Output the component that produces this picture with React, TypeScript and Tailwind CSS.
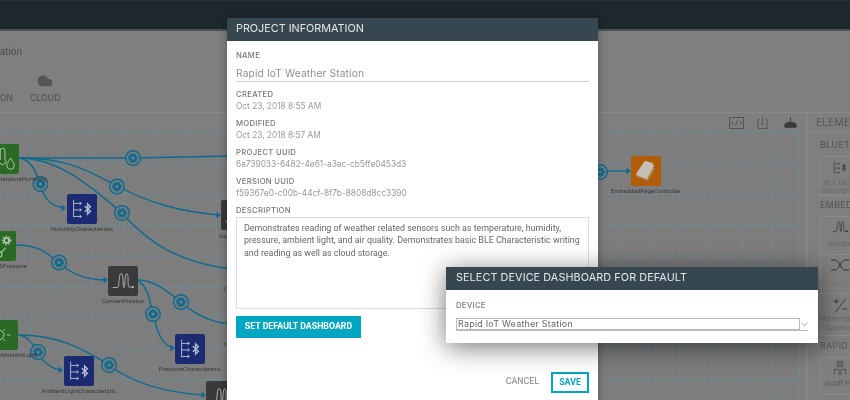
import React from "react";
import { Cloud } from "lucide-react";

const OY = 132;
const wires = [
  "M19 158 C60 158 100 158 133 158 L230 156",
  "M19 158 C70 158 90 172 117 186 C150 203 180 212 220 215",
  "M19 158 C60 158 95 190 122 213 C150 245 180 262 230 269",
  "M19 158 C32 160 36 172 40 184 C44 198 50 207 65 208",
  "M16 245 C40 245 48 254 59 263 C72 274 85 280 107 280",
  "M137 280 C155 280 168 292 181 302 C195 315 210 322 230 324",
  "M137 280 C147 285 150 300 153 314 C157 332 162 346 174 348",
  "M18 335 C28 336 33 344 38 352 C43 362 50 369 62 370",
  "M18 335 C60 335 85 350 109 365 C135 385 170 393 205 395",
  "M600 171 L630 171",
];
const arrows: [number, number][] = [[220, 215], [65, 208], [107, 280], [174, 348], [62, 370], [205, 395], [630, 171]];
const gears: [number, number][] = [[133, 158], [117, 186.5], [40.5, 184], [122, 213], [59, 262.5], [181, 302], [153, 314], [38, 352], [109, 365], [600, 172]];

function BleIcon({ className = "", color = "#b8bdd2" }: { className?: string; color?: string }) {
  return (
    <svg viewBox="0 0 30 30" className={className} fill="none" stroke={color} strokeWidth="1">
      <path d="M6 5V24M6 9H14M6 16H14M6 23H14" />
      <path d="M12.5 7.5L14.5 9L12.5 10.5M12.5 14.5L14.5 16L12.5 17.5M12.5 21.5L14.5 23L12.5 24.5" />
      <path d="M18 12L24 17.5L21 20.5V9.5L24 12.5L18 18" strokeWidth="1.5" />
    </svg>
  );
}
function WaveIcon({ className = "", color = "#b5b5b5" }: { className?: string; color?: string }) {
  return (
    <svg viewBox="0 0 30 30" className={className} fill="none" stroke={color} strokeWidth="1">
      <path d="M4 22H9C11.5 22 10 7 13 7S14.5 22 16 22 16.5 7 19 7 19.5 21 21.5 21.5H26" />
      <circle cx="25.5" cy="21.5" r="0.9" fill={color} />
    </svg>
  );
}

type N = { x: number; y: number; color: string; label?: string; icon: React.ReactNode };
const sun = (
  <svg viewBox="0 0 30 30" className="h-full w-full" fill="none" stroke="#b9cbb5" strokeWidth="1">
    <circle cx="11" cy="15" r="5" />
    <path d="M11 5V8M11 22V25M19 15H23M17.5 8.5L15.5 10.5M17.5 21.5L15.5 19.5" />
  </svg>
);
const nodes: N[] = [
  {
    x: -11, y: 144, color: "#2b6a25", icon: (
      <svg viewBox="0 0 30 30" className="h-full w-full" fill="none" stroke="#b9cbb5" strokeWidth="1">
        <path d="M11 6V15A3.5 3.5 0 1 0 16 15V6A2.5 2.5 0 0 0 11 6Z" />
        <path d="M22 14C24 18 26 19 26 22A4 4 0 0 1 18 22C18 19 20 18 22 14Z" />
      </svg>
    ),
  },
  { x: 67, y: 194, color: "#1c2a72", label: "HumidityCharacteristic", icon: <BleIcon className="h-full w-full" /> },
  { x: 221, y: 200, color: "#3a3a3a", icon: <WaveIcon className="h-full w-full" /> },
  {
    x: -14, y: 231, color: "#2b6a25", icon: (
      <svg viewBox="0 0 30 30" className="h-full w-full" fill="none" stroke="#b9cbb5" strokeWidth="1.1">
        <circle cx="21" cy="9" r="2.6" strokeWidth="1.8" />
        <circle cx="21" cy="9" r="4.4" strokeDasharray="1.6 1.6" strokeWidth="1.4" />
        <circle cx="13" cy="24" r="3" />
        <path d="M15 22L20 17" />
      </svg>
    ),
  },
  { x: 108, y: 265.5, color: "#3a3a3a", label: "ConvertPressur", icon: <WaveIcon className="h-full w-full" /> },
  { x: 175, y: 334, color: "#1c2a72", label: "PressureCharacteristic", icon: <BleIcon className="h-full w-full" /> },
  { x: -12, y: 320, color: "#2b6a25", icon: sun },
  { x: 64, y: 355.5, color: "#1c2a72", label: "AmbientLightCharacteristic", icon: <BleIcon className="h-full w-full" /> },
  { x: 206, y: 381, color: "#3a3a3a", icon: <WaveIcon className="h-full w-full" /> },
  {
    x: 631, y: 156, color: "#b05c08", label: "EmbeddedPageController", icon: (
      <svg viewBox="0 0 30 30" className="h-full w-full">
        <path d="M4 21L12 8L25 12L17 26Z" fill="#a87a4a" />
        <path d="M4 19L13 6L24 9L16 24Z" fill="#cbb9a2" />
        <path d="M5 17L14 4L23 7L15 22Z" fill="#c4c0b9" />
      </svg>
    ),
  },
];
const cutLabels: [string, number, number][] = [
  ["peratureHumidity", -1, 179],
  ["5Pressure", -1, 266],
  ["AmbientLight", 0, 355],
  ["Ge", 219, 236],
  ["C", 224, 289],
  ["C", 224, 344],
];

function Label({ children }: { children: React.ReactNode }) {
  return <div className="text-[7.7px] leading-[11px] font-medium tracking-[0.3px] text-[#777] uppercase">{children}</div>;
}
function Info({ label, value }: { label: string; value: string }) {
  return (
    <div className="mb-[7px] h-[22px]">
      <Label>{label}</Label>
      <div className="text-[8.3px] leading-[12px] text-[#999]">{value}</div>
    </div>
  );
}
function Card({ children, h }: { children: React.ReactNode; h: string }) {
  return <div className={`flex w-[40px] flex-col items-center border border-[#8b8b8b] whitespace-nowrap ${h}`}>{children}</div>;
}
function Section({ children, className }: { children: React.ReactNode; className: string }) {
  return <div className={`text-[9px] leading-[12px] tracking-[0.3px] whitespace-nowrap text-[#555] ${className}`}>{children}</div>;
}

export default function App() {
  return (
    <div className="relative h-[400px] w-[850px] overflow-hidden bg-[#7f7f7f] font-['Inter',sans-serif]">
      <div className="flex h-full flex-col blur-[0.5px]">
        <div className="h-[31px] shrink-0 border-t border-b-2 border-t-[#273136] border-b-[#46524f] bg-[#1e282c]" />
        <div className="flex h-[82px] shrink-0 flex-col border-b border-[#8a8a8a]">
          <div className="mt-[15px] text-[9.5px] leading-[12px] text-[#4c4c4c]">ation</div>
          <div className="mt-[15px] flex items-end">
            <div className="w-[30px] text-[8.5px] leading-[10px] text-[#4c4c4c]">ON</div>
            <div className="flex flex-col items-center">
              <Cloud className="mb-[4px] h-[16px] w-[16px]" fill="#555" stroke="#555" />
              <div className="text-[8.5px] leading-[10px] tracking-[0.2px] text-[#4c4c4c]">CLOUD</div>
            </div>
          </div>
        </div>
        <div className="flex min-h-0 flex-1">
          <div className="flex w-[808px] shrink-0 flex-col border-r-2 border-[#868686] pr-[7px]">
            <div className="flex h-[19px] shrink-0 items-center justify-end pr-[2px]">
              <svg viewBox="0 0 15 12" className="h-[12px] w-[15px]" fill="none" stroke="#4a4a4a" strokeWidth="0.8">
                <rect x="0.5" y="0.5" width="14" height="11" />
                <path d="M4 4L2.5 6L4 8M11 4L12.5 6L11 8M8.5 3.5L6.5 8.5" />
              </svg>
              <svg viewBox="0 0 12 14" className="ml-[13px] h-[14px] w-[11px]" fill="none" stroke="#4a4a4a" strokeWidth="0.8">
                <path d="M3 3H1V13H11V3H9M6 1V9M4 7L6 9L8 7" />
              </svg>
              <svg viewBox="0 0 14 12" className="ml-[16px] h-[12px] w-[13px]" fill="#3a3a3a">
                <path d="M0.5 7L4 5H6.5V0H7.5V5H10L13.5 7V11H0.5Z" />
              </svg>
            </div>
            <div className="relative min-h-0 flex-1 border-r border-[#708890] bg-[#7d7d7d] bg-[linear-gradient(#708890_1px,transparent_1px),linear-gradient(90deg,#708890_1px,transparent_1px)] bg-[size:30.9px_30.9px] bg-[position:-0.4px_0]">
              <svg viewBox={`0 ${OY} 800 268`} className="absolute top-0 left-0 h-[268px] w-[800px]" fill="none">
                {wires.map((d) => (
                  <path key={d} d={d} stroke="#0b6b90" strokeWidth="1.4" />
                ))}
                {arrows.map(([x, y]) => (
                  <path key={x} d={`M${x - 3.5} ${y - 3.4}L${x + 0.8} ${y}L${x - 3.5} ${y + 3.4}Z`} fill="#0b6b90" />
                ))}
                {gears.map(([x, y]) => (
                  <g key={x}>
                    <circle cx={x} cy={y} r="7.3" fill="#7d7d7d" stroke="#0b6b90" strokeWidth="1.4" />
                    <circle cx={x} cy={y} r="2.7" stroke="#0b6b90" strokeWidth="2.2" />
                    <circle cx={x} cy={y} r="4.3" stroke="#0b6b90" strokeWidth="1.5" strokeDasharray="1.6 1.1" />
                  </g>
                ))}
              </svg>
              {nodes.map((n) => (
                <div key={n.x} className="absolute h-[30px] w-[30px]" style={{ left: n.x, top: n.y - OY }}>
                  <div className="h-full w-full rounded-[2px] p-[1px]" style={{ background: n.color }}>
                    {n.icon}
                  </div>
                  {n.label && (
                    <div className="absolute top-[30px] left-1/2 -translate-x-1/2 font-['Roboto',sans-serif] text-[6.2px] leading-[10px] whitespace-nowrap text-[#3a3a3a]">
                      {n.label}
                    </div>
                  )}
                </div>
              ))}
              {cutLabels.map(([t, x, y]) => (
                <div
                  key={t + y}
                  className="absolute font-['Roboto',sans-serif] text-[6.2px] leading-[10px] whitespace-nowrap text-[#3a3a3a]"
                  style={{ left: x, top: y - OY - 5 }}
                >
                  {t}
                </div>
              ))}
            </div>
          </div>
          <div className="min-w-0 flex-1 overflow-hidden">
            <div className="flex h-[19px] items-center border-b border-[#868686] pl-[8px] text-[10px] tracking-[0.3px] whitespace-nowrap text-[#555]">ELEMENTS</div>
            <div className="pl-[12px] font-['Roboto',sans-serif] text-[6.5px] leading-[8px] text-[#666]">
              <Section className="mt-[7px] mb-[5px] font-['Inter',sans-serif]">BLUETOOTH</Section>
              <Card h="h-[40px]">
                <BleIcon className="mt-[1px] h-[20px] w-[20px]" color="#3a3a3a" />
                <div className="mt-[2px] tracking-[0.3px]">BLE GATT</div>
                <div>Characteristic</div>
              </Card>
              <Section className="mt-[3px] mb-[5px] font-['Inter',sans-serif]">EMBEDDED</Section>
              <Card h="h-[39px]">
                <WaveIcon className="h-[20px] w-[20px]" color="#333" />
                <div className="mt-[3px]">Function</div>
              </Card>
              <Card h="h-[39px] border-t-0">
                <svg viewBox="0 0 20 14" className="mt-[3px] h-[14px] w-[20px]" fill="none" stroke="#333" strokeWidth="1">
                  <path d="M1 2H5C9 2 11 12 15 12H19M1 12H5C9 12 11 2 15 2H19" />
                </svg>
                <div className="mt-[8px] text-[#777]">UART</div>
              </Card>
              <Card h="h-[42px] border-t-0">
                <svg viewBox="0 0 20 20" className="mt-[3px] h-[17px] w-[17px]" fill="none" stroke="#333" strokeWidth="1">
                  <path d="M2 5H8M5 2V8M12 14H18M16 2L4 18" />
                </svg>
                <div className="mt-[1px]">Mathematical</div>
                <div className="mt-[1px]">Operation</div>
              </Card>
              <Section className="mt-[4px] mb-[5px] font-['Inter',sans-serif]">RAPID KIT</Section>
              <Card h="h-[38px]">
                <svg viewBox="0 0 16 18" className="mt-[2px] h-[17px] w-[16px]" fill="none" stroke="#4a4a4a" strokeWidth="0.9">
                  <rect x="5" y="1" width="6" height="6" rx="1.5" />
                  <path d="M5 1L11 7M11 1L5 7M2 16V10H7V16M9 16V10H14V16" />
                </svg>
                <div className="mt-[3px] text-[#555]">On/Off Pair</div>
              </Card>
            </div>
          </div>
        </div>
      </div>

      {/* Project information dialog */}
      <div className="absolute top-[18px] left-[227px] flex h-[400px] w-[371px] flex-col bg-white shadow-[0_0_8px_rgba(0,0,0,0.35)] blur-[0.3px]">
        <div className="flex h-[23px] shrink-0 items-center bg-[#37474f] pl-[9px] text-[10.8px] text-[#e4e8ea]">PROJECT INFORMATION</div>
        <div className="px-[9px] pt-[9px]">
          <Label>Name</Label>
          <div className="mt-[3px] h-[18px] border-b border-[#cfcfcf] text-[10.2px] leading-[18px] tracking-[0.15px] text-[#8f8f8f]">Rapid IoT Weather Station</div>
          <div className="mt-[7px]">
            <Info label="Created" value="Oct 23, 2018 8:55 AM" />
            <Info label="Modified" value="Oct 23, 2018 8:57 AM" />
            <Info label="Project UUID" value="6a739033-6482-4e61-a3ac-cb5ffe0453d3" />
            <Info label="Version UUID" value="f59367e0-c00b-44cf-8f7b-8808d8cc3390" />
          </div>
          <Label>Description</Label>
          <div className="mt-[1px] h-[92px] border border-[#ddd] px-[7px] py-[4px] font-['Roboto',sans-serif] text-[8.9px] leading-[12.3px] text-[#666]">
            Demonstrates reading of weather related sensors such as temperature, humidity, pressure, ambient light, and air quality. Demonstrates basic BLE Characteristic writing and reading as well as cloud storage.
          </div>
          <button className="mt-[7px] flex h-[22px] w-[125px] items-center justify-center bg-[#00a5bf] font-['Roboto',sans-serif] text-[8.8px] font-bold text-white">
            SET DEFAULT DASHBOARD
          </button>
          <div className="mt-[34px] flex items-center justify-end gap-[12px] font-['Roboto',sans-serif] text-[8.8px] font-medium">
            <span className="-mt-[2px] text-[#999]">CANCEL</span>
            <button className="flex h-[21px] w-[38px] items-center justify-center border-2 border-[#00a5bf] font-bold text-[#00a5bf]">SAVE</button>
          </div>
        </div>
      </div>

      {/* Device dashboard dialog */}
      <div className="absolute top-[267px] left-[446px] w-[372px] bg-white shadow-[0_4px_26px_rgba(0,0,0,0.55)] blur-[0.3px]">
        <div className="flex h-[23px] items-center bg-[#37474f] pl-[10px] text-[10.8px] tracking-[0.1px] text-[#e4e8ea]">SELECT DEVICE DASHBOARD FOR DEFAULT</div>
        <div className="h-[53px] px-[10px] pt-[10px]">
          <Label>Device</Label>
          <div className="mt-[7px] flex w-[352px] items-center border-b border-[#bbb]">
            <div className="flex h-[12px] w-[345px] items-center border border-[#bbb] pl-[1px] text-[9px] tracking-[0.2px] text-[#666]">Rapid IoT Weather Station</div>
            <svg viewBox="0 0 8 5" className="ml-[1px] h-[5px] w-[7px]" fill="none" stroke="#777" strokeWidth="0.8">
              <path d="M0.5 0.5L4 4L7.5 0.5" />
            </svg>
          </div>
        </div>
      </div>
    </div>
  );
}
